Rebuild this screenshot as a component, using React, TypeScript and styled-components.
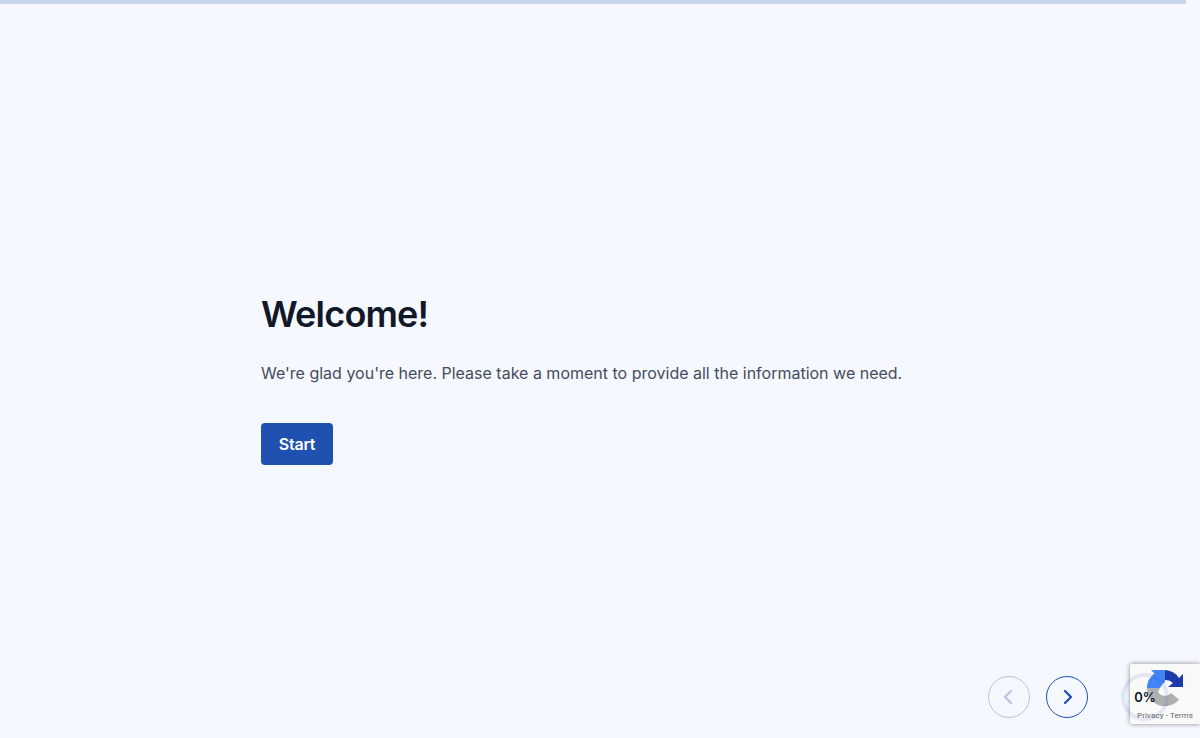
import React from "react";
import styled, { createGlobalStyle } from "styled-components";

const GlobalStyle = createGlobalStyle`
  html, body {
    margin: 0;
    padding: 0;
    height: 100%;
    overflow: hidden;
    background: #f5f8ff;
    font-family: Inter, "Liberation Sans", sans-serif;
  }
  * {
    box-sizing: border-box;
  }
`;

const Page = styled.div`
  position: relative;
  display: flex;
  flex-direction: column;
  height: 100vh;
`;

const ProgressBar = styled.div`
  flex: none;
  width: 1186px;
  height: 4px;
  background: #c6d4f0;
`;

const Main = styled.main`
  flex: 1;
  display: flex;
  flex-direction: column;
  align-items: flex-start;
  padding: 288px 0 0 261px;
`;

const Title = styled.h1`
  margin: 0;
  font-size: 36px;
  line-height: 44px;
  font-weight: 600;
  letter-spacing: -0.8px;
  color: #111827;
`;

const Intro = styled.p`
  margin: 25px 0 0;
  font-size: 16px;
  line-height: 24px;
  color: #454c5c;
`;

const StartButton = styled.button`
  margin-top: 38px;
  width: 72px;
  height: 42px;
  border: 0;
  border-radius: 4px;
  background: #2050b0;
  color: #fff;
  font-family: inherit;
  font-size: 16px;
  font-weight: 600;
  letter-spacing: -0.2px;
  cursor: pointer;
`;

const Footer = styled.footer`
  flex: none;
  display: flex;
  justify-content: flex-end;
  align-items: center;
  padding: 0 31px 17px 0;
`;

const NavButton = styled.button<{ $disabled?: boolean }>`
  display: flex;
  align-items: center;
  justify-content: center;
  width: 42px;
  height: 42px;
  margin-right: 16px;
  padding: 0;
  border: 1px solid #2050b0;
  border-radius: 50%;
  background: transparent;
  color: #2050b0;
  opacity: ${(p) => (p.$disabled ? 0.3 : 1)};
`;

const ChevronIcon = styled.svg`
  display: block;
  fill: none;
  stroke: currentColor;
  stroke-width: 2.25;
  stroke-linecap: round;
  stroke-linejoin: round;
`;

const ProgressRing = styled.div`
  position: relative;
  z-index: 2;
  display: flex;
  align-items: center;
  justify-content: center;
  width: 48px;
  height: 48px;
  margin-left: 17px;
  border: 4px solid rgba(32, 80, 176, 0.1);
  border-radius: 50%;
  font-size: 13px;
  font-weight: 600;
  color: #111827;
`;

const Badge = styled.div`
  position: absolute;
  right: 0;
  bottom: 14px;
  width: 70px;
  height: 60px;
  background: #f9f9f9;
  border-radius: 2px 0 0 2px;
  box-shadow: 0 0 5px rgba(128, 128, 128, 0.9);
`;

const BadgeLogo = styled.svg`
  position: absolute;
  left: 13px;
  top: 2px;
  display: block;
`;

const BadgeLinks = styled.div`
  position: absolute;
  left: 0;
  right: 0;
  bottom: 3px;
  text-align: center;
  font-family: Roboto, "Liberation Sans", sans-serif;
  font-size: 8px;
  line-height: 10px;
  letter-spacing: 0.1px;
  color: #666;
`;

export default function App() {
  return (
    <Page>
      <GlobalStyle />
      <ProgressBar />
      <Main>
        <Title>Welcome!</Title>
        <Intro>We're glad you're here. Please take a moment to provide all the information we need.</Intro>
        <StartButton>Start</StartButton>
      </Main>
      <Footer>
        <NavButton $disabled aria-label="Previous">
          <ChevronIcon width="24" height="24" viewBox="0 0 24 24">
            <path d="M14 18l-6-6 6-6" />
          </ChevronIcon>
        </NavButton>
        <NavButton aria-label="Next">
          <ChevronIcon width="24" height="24" viewBox="0 0 24 24">
            <path d="M10 18l6-6-6-6" />
          </ChevronIcon>
        </NavButton>
        <ProgressRing>0%</ProgressRing>
      </Footer>
      <Badge>
        <BadgeLogo width="44" height="44" viewBox="0 0 44 44">
          <path d="M4 22A18 18 0 0 0 36 33.5L28 27A8 8 0 0 1 15 26L17 22Z" fill="#b0b0b0" />
          <path d="M4 22A18 18 0 0 1 11.5 7.5L8 4H22V16L19.5 18L17 22Z" fill="#4285f4" />
          <path d="M22 4A18 18 0 0 1 36 12L40 8V21H25L30 17A10 10 0 0 0 22 14Z" fill="#1c3aa9" />
        </BadgeLogo>
        <BadgeLinks>Privacy - Terms</BadgeLinks>
      </Badge>
    </Page>
  );
}
